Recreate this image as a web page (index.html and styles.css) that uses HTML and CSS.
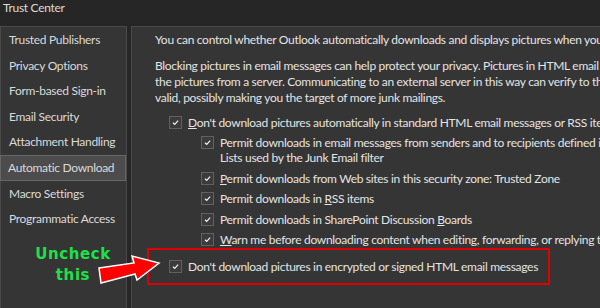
FILE: index.html
```html
<!DOCTYPE html>
<html lang="en">
<head>
  <meta charset="UTF-8">
  <meta name="viewport" content="width=device-width, initial-scale=1.0">
  <title>Trust Center</title>
  <link rel="stylesheet" href="styles.css">
</head>
<body>

<div class="titlebar">Trust Center</div>

<div class="main">
  <ul class="sidebar">
    <li>Trusted Publishers</li>
    <li>Privacy Options</li>
    <li>Form-based Sign-in</li>
    <li>Email Security</li>
    <li>Attachment Handling</li>
    <li class="active">Automatic Download</li>
    <li>Macro Settings</li>
    <li>Programmatic Access</li>
  </ul>

  <div class="content">
    <p class="intro">You can control whether Outlook automatically downloads and displays pictures when you open an email message.</p>
    <p class="desc">Blocking pictures in email messages can help protect your privacy. Pictures in HTML email can require Outlook to download<br>the pictures from a server. Communicating to an external server in this way can verify to the sender that your email address is<br>valid, possibly making you the target of more junk mailings.</p>

    <label class="check top">
      <span class="box"><svg viewBox="0 0 13 13"><path d="M3.5 6.8 L5.6 8.8 L9.6 4.2" /></svg></span>
      <span><u>D</u>on't download pictures automatically in standard HTML email messages or RSS items</span>
    </label>

    <div class="nested">
      <label class="check">
        <span class="box"><svg viewBox="0 0 13 13"><path d="M3.5 6.8 L5.6 8.8 L9.6 4.2" /></svg></span>
        <span>Permit downloads in email messages from senders and to recipients defined in the Safe Senders and Safe Recipients<br>Lists used by the Junk Email filter</span>
      </label>
      <label class="check">
        <span class="box"><svg viewBox="0 0 13 13"><path d="M3.5 6.8 L5.6 8.8 L9.6 4.2" /></svg></span>
        <span><u>P</u>ermit downloads from Web sites in this security zone: Trusted Zone</span>
      </label>
      <label class="check">
        <span class="box"><svg viewBox="0 0 13 13"><path d="M3.5 6.8 L5.6 8.8 L9.6 4.2" /></svg></span>
        <span>Permit downloads in <u>R</u>SS items</span>
      </label>
      <label class="check">
        <span class="box"><svg viewBox="0 0 13 13"><path d="M3.5 6.8 L5.6 8.8 L9.6 4.2" /></svg></span>
        <span>Permit downloads in SharePoint Discussion <u>B</u>oards</span>
      </label>
      <label class="check">
        <span class="box"><svg viewBox="0 0 13 13"><path d="M3.5 6.8 L5.6 8.8 L9.6 4.2" /></svg></span>
        <span><u>W</u>arn me before downloading content when editing, forwarding, or replying to email</span>
      </label>
    </div>

    <div class="highlight">
      <label class="check">
        <span class="box"><svg viewBox="0 0 13 13"><path d="M3.5 6.8 L5.6 8.8 L9.6 4.2" /></svg></span>
        <span>Don't download pictures in encrypted or signed HTML email messages</span>
      </label>
    </div>
  </div>
</div>

<!-- annotation over the screenshot -->
<div class="note">Uncheck<br>this</div>
<svg class="arrow" width="70" height="36" viewBox="96 252 70 36">
  <polygon points="99,268 134,263 132,256 159,263 137,280 135,274 101,283" />
</svg>

</body>
</html>
```

FILE: styles.css
```css
body {
  margin: 0;
  width: 600px;
  height: 308px;
  overflow: hidden;
  background-color: #262626;
  color: #e4e4e4;
  font-family: Lato, sans-serif;
  font-size: 12px;
  letter-spacing: -0.3px;
  position: relative;
}
.titlebar {
  height: 26px;
  padding-left: 3px;
  line-height: 16px;
  color: #dcdcdc;
}
.main {
  display: flex;
  gap: 4px;
  height: 282px;
}
.sidebar {
  list-style: none;
  margin: 0;
  padding: 0;
  width: 125px;
  flex-shrink: 0;
  background-color: #353535;
  border: 1px solid #4a4a4a;
  border-bottom: none;
}
.sidebar li {
  height: 25.6px;
  line-height: 25.6px;
  padding-left: 8px;
  color: #dadada;
  white-space: nowrap;
  box-sizing: border-box;
}
.sidebar li.active {
  background-color: #4c4c4c;
  border: 1px solid #666;
  line-height: 23.6px;
  padding-left: 7px;
  margin-left: -1px;
}
.content {
  flex-shrink: 0;
  width: 760px;
  background-color: #353535;
  border: 1px solid #4a4a4a;
  border-bottom: none;
  padding: 5px 0 0 23px;
  white-space: nowrap;
}
.content p {
  margin: 0;
  line-height: 16px;
}
.desc {
  margin-top: 10px !important;
}
.check {
  display: flex;
  align-items: flex-start;
  gap: 6px;
  line-height: 15px;
}
.check.top {
  margin: 9px 0 0 14px;
  line-height: 16px;
}
.box {
  width: 11px;
  height: 11px;
  flex-shrink: 0;
  margin-top: 1px;
  border: 1px solid #616161;
  background-color: #3b3b3b;
}
.box svg {
  display: block;
  width: 11px;
  height: 11px;
}
.box path {
  fill: none;
  stroke: #f2f2f2;
  stroke-width: 1.4;
}
.nested {
  margin-left: 46px;
}
.nested .check {
  margin-top: 5.5px;
}
.nested .check:first-child {
  margin-top: 4px;
}
.highlight {
  width: 379px;
  height: 33px;
  margin: 1px 0 0 -8px;
  border: 2px solid #e00000;
  display: flex;
  align-items: center;
  padding-left: 20px;
}
.note {
  position: absolute;
  left: 30px;
  top: 244px;
  width: 86px;
  text-align: center;
  font-family: "DejaVu Sans", sans-serif;
  font-weight: bold;
  font-size: 15px;
  line-height: 21px;
  letter-spacing: 0.6px;
  color: #20e04a;
}
.arrow {
  position: absolute;
  left: 96px;
  top: 252px;
}
.arrow polygon {
  fill: #ff0000;
  stroke: #fff;
  stroke-width: 1.5;
  stroke-linejoin: miter;
}
```
